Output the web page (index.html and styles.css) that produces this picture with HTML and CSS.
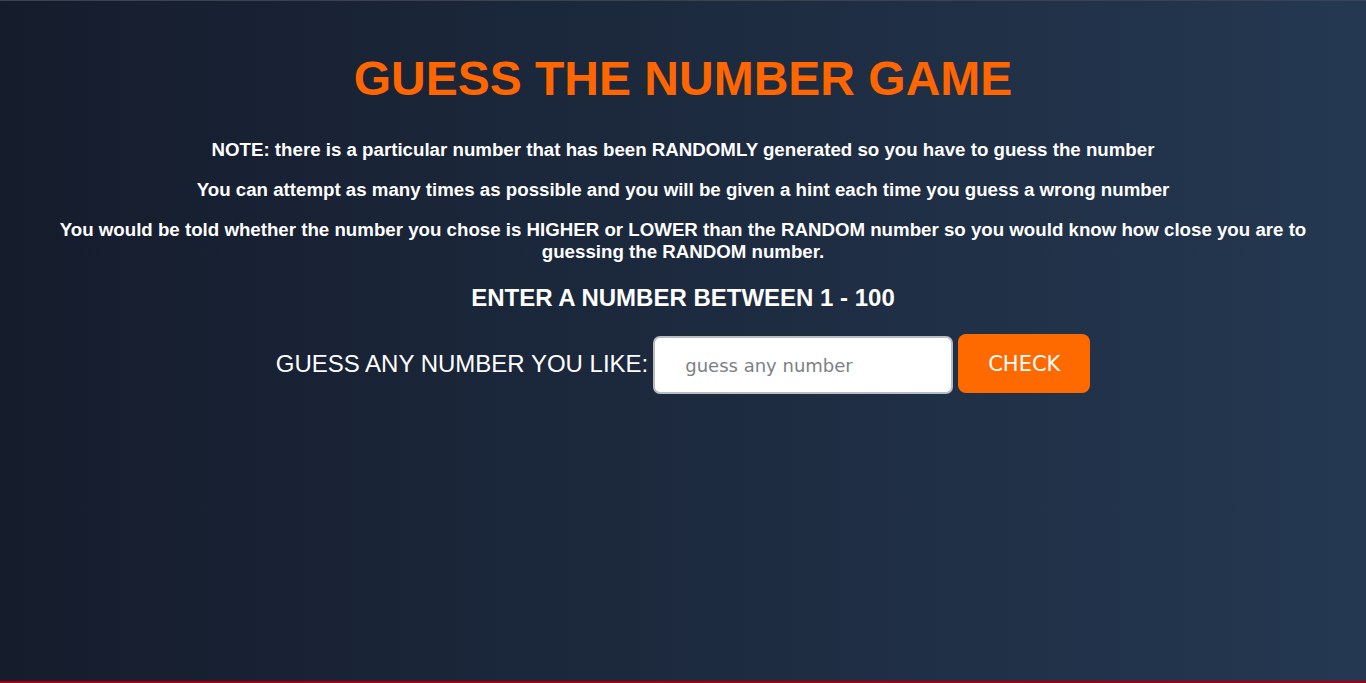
FILE: index.html
```html
<!DOCTYPE html>
<html lang="en">
<head>
<meta charset="utf-8">
<title>Guess The Number Game</title>
<link rel="stylesheet" href="styles.css">
</head>
<body>
<main class="game">
  <h1 class="title">GUESS THE NUMBER GAME</h1>
  <p class="note">NOTE: there is a particular number that has been RANDOMLY generated so you have to guess the number</p>
  <p class="note">You can attempt as many times as possible and you will be given a hint each time you guess a wrong number</p>
  <p class="note">You would be told whether the number you chose is HIGHER or LOWER than the RANDOM number so you would know how close you are to guessing the RANDOM number.</p>
  <h3 class="range">ENTER A NUMBER BETWEEN 1 - 100</h3>
  <form class="guess-form">
    <label class="guess-label" for="guess">GUESS ANY NUMBER YOU LIKE:</label>
    <input class="guess-input" id="guess" type="number" placeholder="guess any number">
    <button class="check-btn" type="button">CHECK</button>
  </form>
</main>
</body>
</html>
```

FILE: styles.css
```css
* { box-sizing: border-box; }
html, body { margin: 0; padding: 0; }
body {
  height: 683px;
  overflow: hidden;
  background: linear-gradient(to right, #151c2c, #243851);
  border-top: 1px solid #3c4250;
  border-bottom: 2px solid #a1000f;
  font-family: "Liberation Sans", Arial, sans-serif;
  color: #ffffff;
}
.game {
  text-align: center;
  padding: 0 50px;
}
.title {
  margin: 46px 0 0;
  font-size: 48px;
  font-weight: 700;
  color: #ff6600;
  line-height: 64px;
}
.note {
  margin: 18px 0 0;
  font-size: 18.7px;
  font-weight: 700;
  line-height: 22px;
}
.title + .note { margin-top: 28px; }
.range {
  margin: 22px 0 0;
  font-size: 24px;
  font-weight: 700;
  line-height: 26px;
}
.guess-form {
  display: flex;
  justify-content: center;
  align-items: center;
  gap: 5px;
  margin-top: 22px;
}
.guess-label {
  font-size: 24px;
}
.guess-input {
  width: 300px;
  height: 58px;
  border: 2px solid #b9bcc2;
  border-radius: 7px;
  padding: 0 30px;
  font-family: "DejaVu Sans", Verdana, sans-serif;
  font-size: 18px;
  color: #333;
  background: #fff;
  outline: none;
  margin-top: 3px;
}
.guess-input::placeholder { color: #7b7f86; }
.check-btn {
  width: 132px;
  height: 59px;
  border: none;
  border-radius: 8px;
  background: #ff6a00;
  color: #fff;
  font-family: "DejaVu Sans", Verdana, sans-serif;
  font-size: 21px;
}
```
